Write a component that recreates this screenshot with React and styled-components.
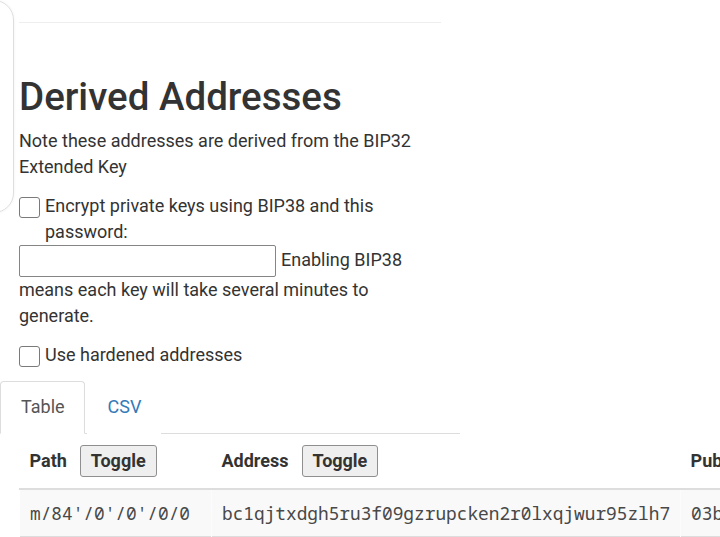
import React from "react";
import styled, { createGlobalStyle } from "styled-components";

const GlobalStyle = createGlobalStyle`
  *, *::before, *::after {
    box-sizing: border-box;
  }

  html, body {
    margin: 0;
    overflow: hidden;
    background: #fff;
  }

  body {
    font-family: Roboto, "Liberation Sans", Arial, sans-serif;
    font-size: 18px;
    line-height: 26px;
    color: #333;
  }
`;

const Page = styled.div`
  position: relative;
  padding-top: 22px;
`;

// edge of the neighbouring panel that peeks in from the left
const PanelEdge = styled.div`
  position: absolute;
  left: -60px;
  top: 0;
  width: 74px;
  height: 213px;
  border: 1px solid #dedede;
  border-radius: 20px;
  box-shadow: 0 0 3px rgba(0, 0, 0, 0.06);
  background: transparent;
  pointer-events: none;
`;

const Container = styled.div`
  width: 460px;
  padding: 0 19px;
`;

const Rule = styled.hr`
  margin: 0;
  border: 0;
  border-top: 1px solid #eee;
`;

const Heading = styled.h2`
  margin: 52px 0 9px;
  font-size: 38.5px;
  line-height: 44px;
  font-weight: 500;
  color: #333;
`;

const Para = styled.p`
  margin: 0 0 ${(p) => p.$gap || 13}px;
`;

const CheckLabel = styled.label`
  display: flex;
  align-items: flex-start;
  margin-bottom: ${(p) => p.$gap || 0}px;
`;

const Check = styled.input.attrs({ type: "checkbox" })`
  appearance: none;
  flex: none;
  width: 21px;
  height: 21px;
  margin: 4px 5px 0 0;
  border: 1px solid #7a7a7a;
  border-radius: 3px;
  background: #fff;
`;

const PassInput = styled.input.attrs({ type: "password" })`
  display: inline-block;
  vertical-align: middle;
  width: 257px;
  height: 32px;
  margin: 0 5px 0 0;
  border: 1px solid #858585;
  border-radius: 2px;
  font: inherit;
`;

const Tabs = styled.ul`
  display: flex;
  list-style: none;
  margin: 0 -19px;
  padding: 0;
  border-bottom: 1px solid #ddd;
`;

const Tab = styled.li`
  margin: 0 2px -1px 0;
  padding: 12px 19px 13px 20px;
  border: 1px solid ${(p) => (p.$active ? "#ddd" : "transparent")};
  border-bottom-color: ${(p) => (p.$active ? "#fff" : "transparent")};
  border-radius: 4px 4px 0 0;
  background: #fff;
  color: ${(p) => (p.$active ? "#555" : "#337ab7")};
  cursor: pointer;
`;

const Table = styled.table`
  border-collapse: collapse;
  white-space: nowrap;
`;

const HeadCell = styled.th`
  padding: 11px 10px;
  border-bottom: 2px solid #ddd;
  text-align: left;
  font-weight: 700;
  color: #333;
`;

const HeadInner = styled.div`
  display: flex;
  align-items: center;
  gap: 13px;
`;

const ToggleButton = styled.button`
  height: 32px;
  padding: 0 10px;
  border: 1px solid #8f8f8f;
  border-radius: 3px;
  background: #efefef;
  color: #333;
  font-family: Roboto, "Liberation Sans", Arial, sans-serif;
  font-size: 18px;
  font-weight: 700;
  line-height: 30px;
`;

const Row = styled.tr`
  background: ${(p) => (p.$odd ? "#f9f9f9" : "#fff")};
`;

const Cell = styled.td`
  padding: 10px;
  border-top: 1px solid #ddd;
  border-left: 1px solid ${(p) => (p.$first ? "transparent" : "#fcfcfc")};
  font-family: "Noto Sans Mono", "Droid Sans Mono", "Liberation Mono", monospace;
  font-size: 17.8px;
  color: #484848;
`;

const rows = [
  {
    path: "m/84'/0'/0'/0/0",
    address: "bc1qjtxdgh5ru3f09gzrupcken2r0lxqjwur95zlh7",
    pub: "03b3e0c4b4f2f1b8c0c83a8e8e2d5b8d7c6a1f0e9d8c7b6a5f4e3d2c1b0a9f8e7d",
  },
  {
    path: "m/84'/0'/0'/0/1",
    address: "bc1q4p5ctwhgmdxsj7d6tv6fj5kvaulsxu0fxj4hke",
    pub: "02f1c0a3b9e8d7c6b5a4f3e2d1c0b9a8f7e6d5c4b3a2f1e0d9c8b7a6f5e4d3c2b1",
  },
];

export default function App() {
  return (
    <>
      <GlobalStyle />
      <Page>
        <PanelEdge />
        <Container>
          <Rule />
          <Heading>Derived Addresses</Heading>
          <Para>Note these addresses are derived from the BIP32 Extended Key</Para>
          <CheckLabel>
            <Check />
            <span>Encrypt private keys using BIP38 and this password:</span>
          </CheckLabel>
          <Para>
            <PassInput />
            Enabling BIP38 means each key will take several minutes to generate.
          </Para>
          <CheckLabel $gap={13}>
            <Check />
            <span>Use hardened addresses</span>
          </CheckLabel>
          <Tabs>
            <Tab $active>Table</Tab>
            <Tab>CSV</Tab>
          </Tabs>
          <Table>
            <thead>
              <tr>
                <HeadCell style={{ minWidth: 192 }}>
                  <HeadInner>
                    Path <ToggleButton>Toggle</ToggleButton>
                  </HeadInner>
                </HeadCell>
                <HeadCell>
                  <HeadInner>
                    Address <ToggleButton>Toggle</ToggleButton>
                  </HeadInner>
                </HeadCell>
                <HeadCell>
                  <HeadInner>
                    Public Key <ToggleButton>Toggle</ToggleButton>
                  </HeadInner>
                </HeadCell>
              </tr>
            </thead>
            <tbody>
              {rows.map((r, i) => (
                <Row key={r.path} $odd={i % 2 === 0}>
                  <Cell $first>{r.path}</Cell>
                  <Cell>{r.address}</Cell>
                  <Cell>{r.pub}</Cell>
                </Row>
              ))}
            </tbody>
          </Table>
        </Container>
      </Page>
    </>
  );
}
